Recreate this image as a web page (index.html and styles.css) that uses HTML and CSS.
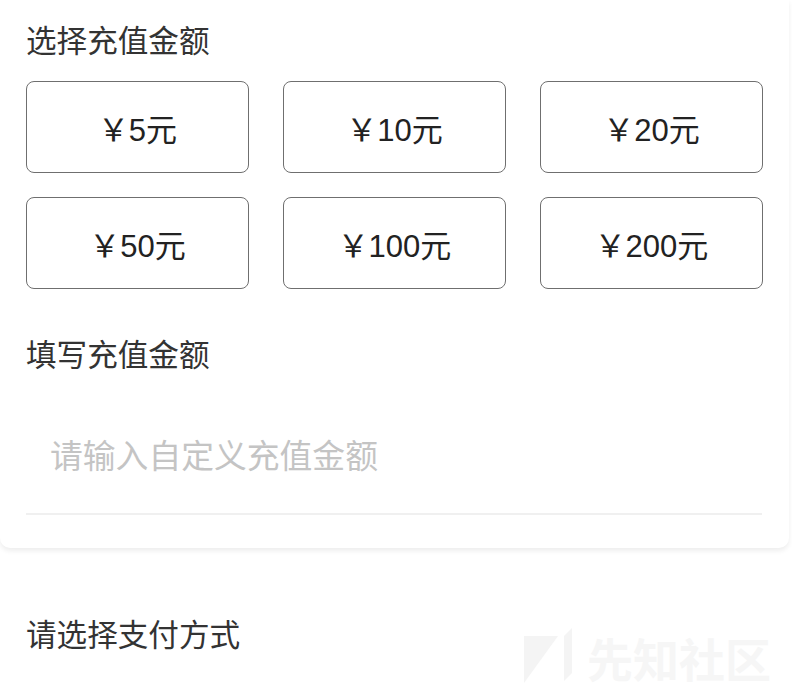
FILE: index.html
```html
<!DOCTYPE html>
<html lang="zh-CN">
<head>
<meta charset="utf-8">
<title>充值</title>
<link rel="stylesheet" href="styles.css">
</head>
<body>
<div class="page">
  <section class="card">
    <h2 class="title first">选择充值金额</h2>
    <div class="amounts">
      <button class="amount">￥5元</button>
      <button class="amount">￥10元</button>
      <button class="amount">￥20元</button>
      <button class="amount">￥50元</button>
      <button class="amount">￥100元</button>
      <button class="amount">￥200元</button>
    </div>
    <h2 class="title second">填写充值金额</h2>
    <div class="field">
      <input class="custom" type="text" placeholder="请输入自定义充值金额">
    </div>
  </section>
  <h2 class="title pay">请选择支付方式</h2>
  <div class="watermark">
    <svg class="wm-logo" width="50" height="58" viewBox="0 0 50 58">
      <polygon points="1,8 35,8 1,55" fill="#f4f4f4"/>
      <polygon points="41,8 49,0 49,45 41,53" fill="#f4f4f4"/>
    </svg>
    <span class="wm-text">先知社区</span>
  </div>
</div>
</body>
</html>
```
FILE: styles.css
```css
* { box-sizing: border-box; }
html, body {
  margin: 0;
  padding: 0;
  background: #ffffff;
}
body {
  font-family: "Liberation Sans", "Noto Sans CJK SC", sans-serif;
  color: #333333;
}
.page {
  position: relative;
  width: 792px;
  height: 689px;
  overflow: hidden;
}
.card {
  width: 789px;
  padding: 0 27px 33px 26px;
  background: #ffffff;
  border-radius: 0 0 10px 10px;
  box-shadow: 0 3px 5px rgba(0, 0, 0, 0.07);
}
.title {
  margin: 0;
  font-size: 30.6px;
  font-weight: normal;
  line-height: 40px;
  color: #333333;
}
.title.first { padding-top: 21px; }
.title.second { margin-top: 46px; }
.title.pay { margin: 67px 0 0 26px; }
.amounts {
  margin-top: 20px;
  display: grid;
  grid-template-columns: repeat(3, 223px);
  column-gap: 34px;
  row-gap: 24px;
}
.amount {
  height: 92px;
  border: 1px solid #6f6f6f;
  border-radius: 8px;
  background: #ffffff;
  font-family: "Liberation Sans", "Noto Sans CJK SC", sans-serif;
  font-size: 31px;
  color: #222222;
  padding: 0;
}
.field {
  padding: 50px 0 24px 24px;
  border-bottom: 2px solid #f0f0f0;
}
.custom {
  display: block;
  width: 100%;
  height: 64px;
  border: 0;
  outline: none;
  padding: 0;
  font-family: "Liberation Sans", "Noto Sans CJK SC", sans-serif;
  font-size: 32.8px;
  color: #333333;
  background: transparent;
}
.custom::placeholder { color: #c4c4c4; }
.watermark {
  position: absolute;
  left: 523px;
  top: 628px;
  display: flex;
  align-items: center;
  gap: 14px;
}
.wm-text {
  font-family: "Noto Sans CJK SC", sans-serif;
  font-size: 46px;
  font-weight: bold;
  line-height: 58px;
  color: #f6f6f6;
}
```
